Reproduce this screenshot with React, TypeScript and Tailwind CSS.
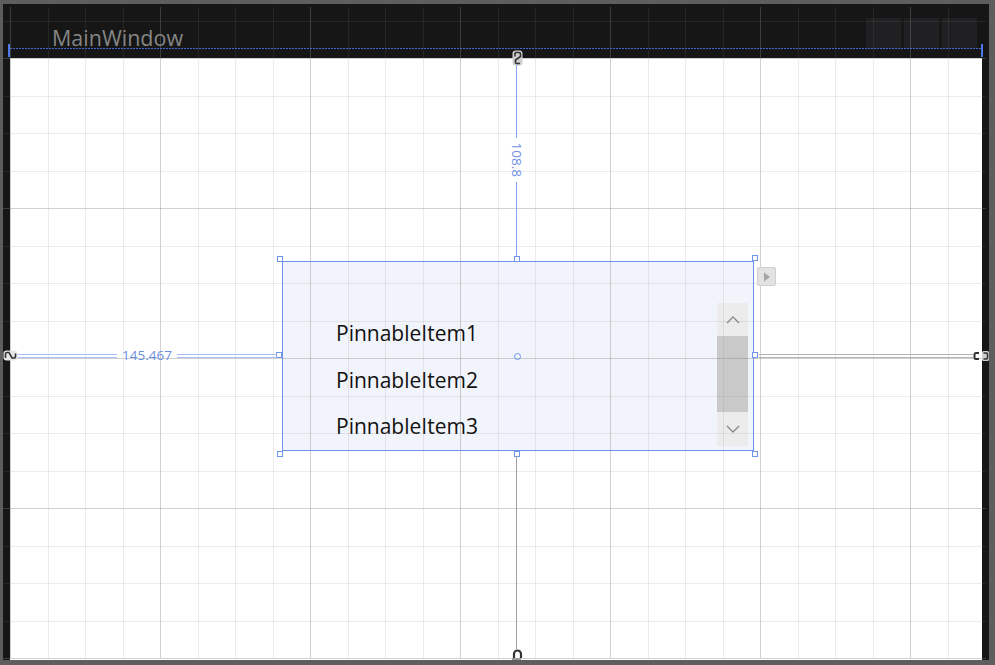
import React from "react";

function Grid() {
  const xs: number[] = [];
  for (let k = 0; k <= 25; k++) xs.push(10 + 37.5 * k);
  const ys: number[] = [];
  for (let k = -1; k <= 16; k++) ys.push(58 + 37.5 * k);
  return (
    <svg className="absolute left-0 top-0 pointer-events-none" width={995} height={665} shapeRendering="crispEdges">
      {xs.map((x, i) => (
        <line key={"x" + i} x1={Math.round(x) + 0.5} x2={Math.round(x) + 0.5} y1={7} y2={658} stroke="rgb(128,128,128)" strokeOpacity={i % 4 === 0 ? 0.36 : 0.15} />
      ))}
      {ys.map((y, i) => (
        <line key={"y" + i} y1={Math.round(y) + 0.5} y2={Math.round(y) + 0.5} x1={3} x2={986} stroke="rgb(128,128,128)" strokeOpacity={(i - 1) % 4 === 0 ? 0.36 : 0.15} />
      ))}
      <line x1={10} x2={981} y1={48.5} y2={48.5} stroke="#4466cc" strokeWidth={1} strokeDasharray="2 1" />
    </svg>
  );
}

function Handle({ className }: { className: string }) {
  return <div className={"absolute w-[6px] h-[6px] border border-[#6f95ea] bg-white " + className} />;
}

function Chevron({ up }: { up?: boolean }) {
  return (
    <div className="h-[33px] w-full flex items-center justify-center">
      <svg width="14" height="8" viewBox="0 0 14 8">
        <path d={up ? "M1 7 L7 1 L13 7" : "M1 1 L7 7 L13 1"} fill="none" stroke="#8a8a8a" strokeWidth="1.4" />
      </svg>
    </div>
  );
}

export default function App() {
  return (
    <div className="relative w-[995px] h-[665px] overflow-hidden bg-[#5e5e5e] pl-[3px] pt-[4px] font-['Open_Sans',sans-serif]">
      {/* window */}
      <div className="w-[986px] h-[656px] bg-[#161616] flex flex-col">
        <div className="h-[54px] flex items-start justify-between shrink-0">
          <div className="pl-[49px] pt-[19px] text-[21.5px] leading-[30px] text-[#858585]">MainWindow</div>
          <div className="flex gap-[3px] pt-[14px] pr-[12px]">
            <div className="w-[35px] h-[31px] bg-[#202023]" />
            <div className="w-[35px] h-[31px] bg-[#202023]" />
            <div className="w-[35px] h-[31px] bg-[#202023]" />
          </div>
        </div>
        <div className="flex-1 mx-[7px] bg-white" />
      </div>

      {/* listbox on the design canvas */}
      <div className="absolute left-[282px] top-[261px] w-[472px] h-[190px] bg-[#f1f4fa] border border-[#6f95ea] flex items-start justify-between pl-[53px] pr-[5px] pt-[41px]">
        <div className="flex flex-col pt-[7px] text-[21px] leading-[46.5px] text-[#111]">
          <div>PinnableItem1</div>
          <div>PinnableItem2</div>
          <div>PinnableItem3</div>
        </div>
        <div className="w-[31px] h-[143px] bg-[#ececec] flex flex-col">
          <Chevron up />
          <div className="w-full h-[76px] bg-[#c9c9c9]" />
          <Chevron />
        </div>
      </div>

      <Grid />

      {/* selection adorners */}
      <div className="absolute left-[282px] top-[261px] w-[472px] h-[190px] pointer-events-none">
        <Handle className="left-[-5px] top-[-5px]" />
        <Handle className="left-[232px] top-[-5px]" />
        <Handle className="right-[-4px] top-[-6px]" />
        <Handle className="left-[-6px] top-[91px]" />
        <Handle className="right-[-4px] top-[91px]" />
        <Handle className="left-[-5px] bottom-[-6px]" />
        <Handle className="left-[232px] bottom-[-6px]" />
        <Handle className="right-[-4px] bottom-[-6px]" />
        <div className="absolute left-[232px] top-[92px] w-[7px] h-[7px] rounded-full border border-[#6f95ea]" />
        <div className="absolute left-[475px] top-[6px] w-[19px] h-[19px] rounded-[2px] bg-[#e2e2e2] border border-[#cfcfcf] flex items-center justify-center">
          <svg width="8" height="10" viewBox="0 0 8 10"><path d="M1 0.5 L7 5 L1 9.5 Z" fill="#a4a4a4" /></svg>
        </div>
      </div>

      {/* title baseline ticks */}
      <div className="absolute left-[8px] top-[44px] w-[2px] h-[13px] bg-[#4d7ae6]" />
      <div className="absolute left-[981px] top-[44px] w-[2px] h-[13px] bg-[#4d7ae6]" />

      {/* top margin */}
      <div className="absolute left-[510px] top-[64px] w-[13px] h-[192px] flex flex-col items-center">
        <div className="w-px flex-1 bg-[#84a6ee]" />
        <div className="h-[44px] w-full flex items-center justify-center">
          <span className="rotate-90 text-[13.5px] leading-none text-[#6b8fe0] whitespace-nowrap">108.8</span>
        </div>
        <div className="w-px flex-1 bg-[#84a6ee]" />
      </div>
      {/* bottom margin */}
      <div className="absolute left-[516px] top-[456px] w-px h-[193px] bg-[#a0a0a0]" />

      {/* left margin */}
      <div className="absolute left-[17px] top-[346px] w-[260px] h-[20px] flex items-center">
        <div className="flex-1 h-[4px] border-y border-[#a9bff2]" />
        <div className="px-[5px] text-[13.5px] leading-none text-[#6b8fe0]">145.467</div>
        <div className="flex-1 h-[4px] border-y border-[#a9bff2]" />
      </div>
      {/* right margin */}
      <div className="absolute left-[759px] top-[354px] w-[214px] h-[4px] border-y border-[#b4b4b4]" />

      {/* pins */}
      <svg className="absolute left-[512px] top-[50px]" width="11" height="16" viewBox="0 0 11 16">
        <rect x="0.5" y="0.5" width="10" height="15" rx="3" fill="#cfcfcf" />
        <path d="M3 2.5 h4 a1.5 1.5 0 0 1 1.5 1.5 v2.5 l-5 3.5 v2.5 a1 1 0 0 0 1 1 h3.5" fill="none" stroke="#333" strokeWidth="1.6" />
        <path d="M3 2.5 v4" fill="none" stroke="#333" strokeWidth="1.6" />
      </svg>
      <svg className="absolute left-[512px] top-[649px]" width="11" height="9" viewBox="0 0 11 9">
        <path d="M2 9 V5 a3.5 3.5 0 0 1 7 0 V9" fill="none" stroke="#333" strokeWidth="2.2" />
      </svg>
      <div className="absolute left-[512px] top-[658px] w-[9px] h-[2px] bg-[#9a9a9a]" />
      <svg className="absolute left-[3px] top-[350px]" width="15" height="11" viewBox="0 0 15 11">
        <rect x="0.5" y="0.5" width="14" height="10" rx="3" fill="#e6e6e6" />
        <path d="M2.5 8 v-4 a1.5 1.5 0 0 1 1.5 -1.5 h2 l3 5.5 h2 a1.5 1.5 0 0 0 1.5 -1.5 v-3" fill="none" stroke="#333" strokeWidth="1.6" />
      </svg>
      <svg className="absolute left-[973px] top-[350px]" width="17" height="12" viewBox="0 0 17 12">
        <path d="M6 3 h-3 a1.5 1.5 0 0 0 -1.5 1.5 v3 a1.5 1.5 0 0 0 1.5 1.5 h3" fill="none" stroke="#333" strokeWidth="2" />
        <rect x="9" y="1" width="7" height="10" rx="1.5" fill="#d0d0d0" />
        <path d="M10.5 3 h3 a1 1 0 0 1 1 1 v4 a1 1 0 0 1 -1 1 h-3" fill="none" stroke="#333" strokeWidth="1.6" />
      </svg>
    </div>
  );
}
